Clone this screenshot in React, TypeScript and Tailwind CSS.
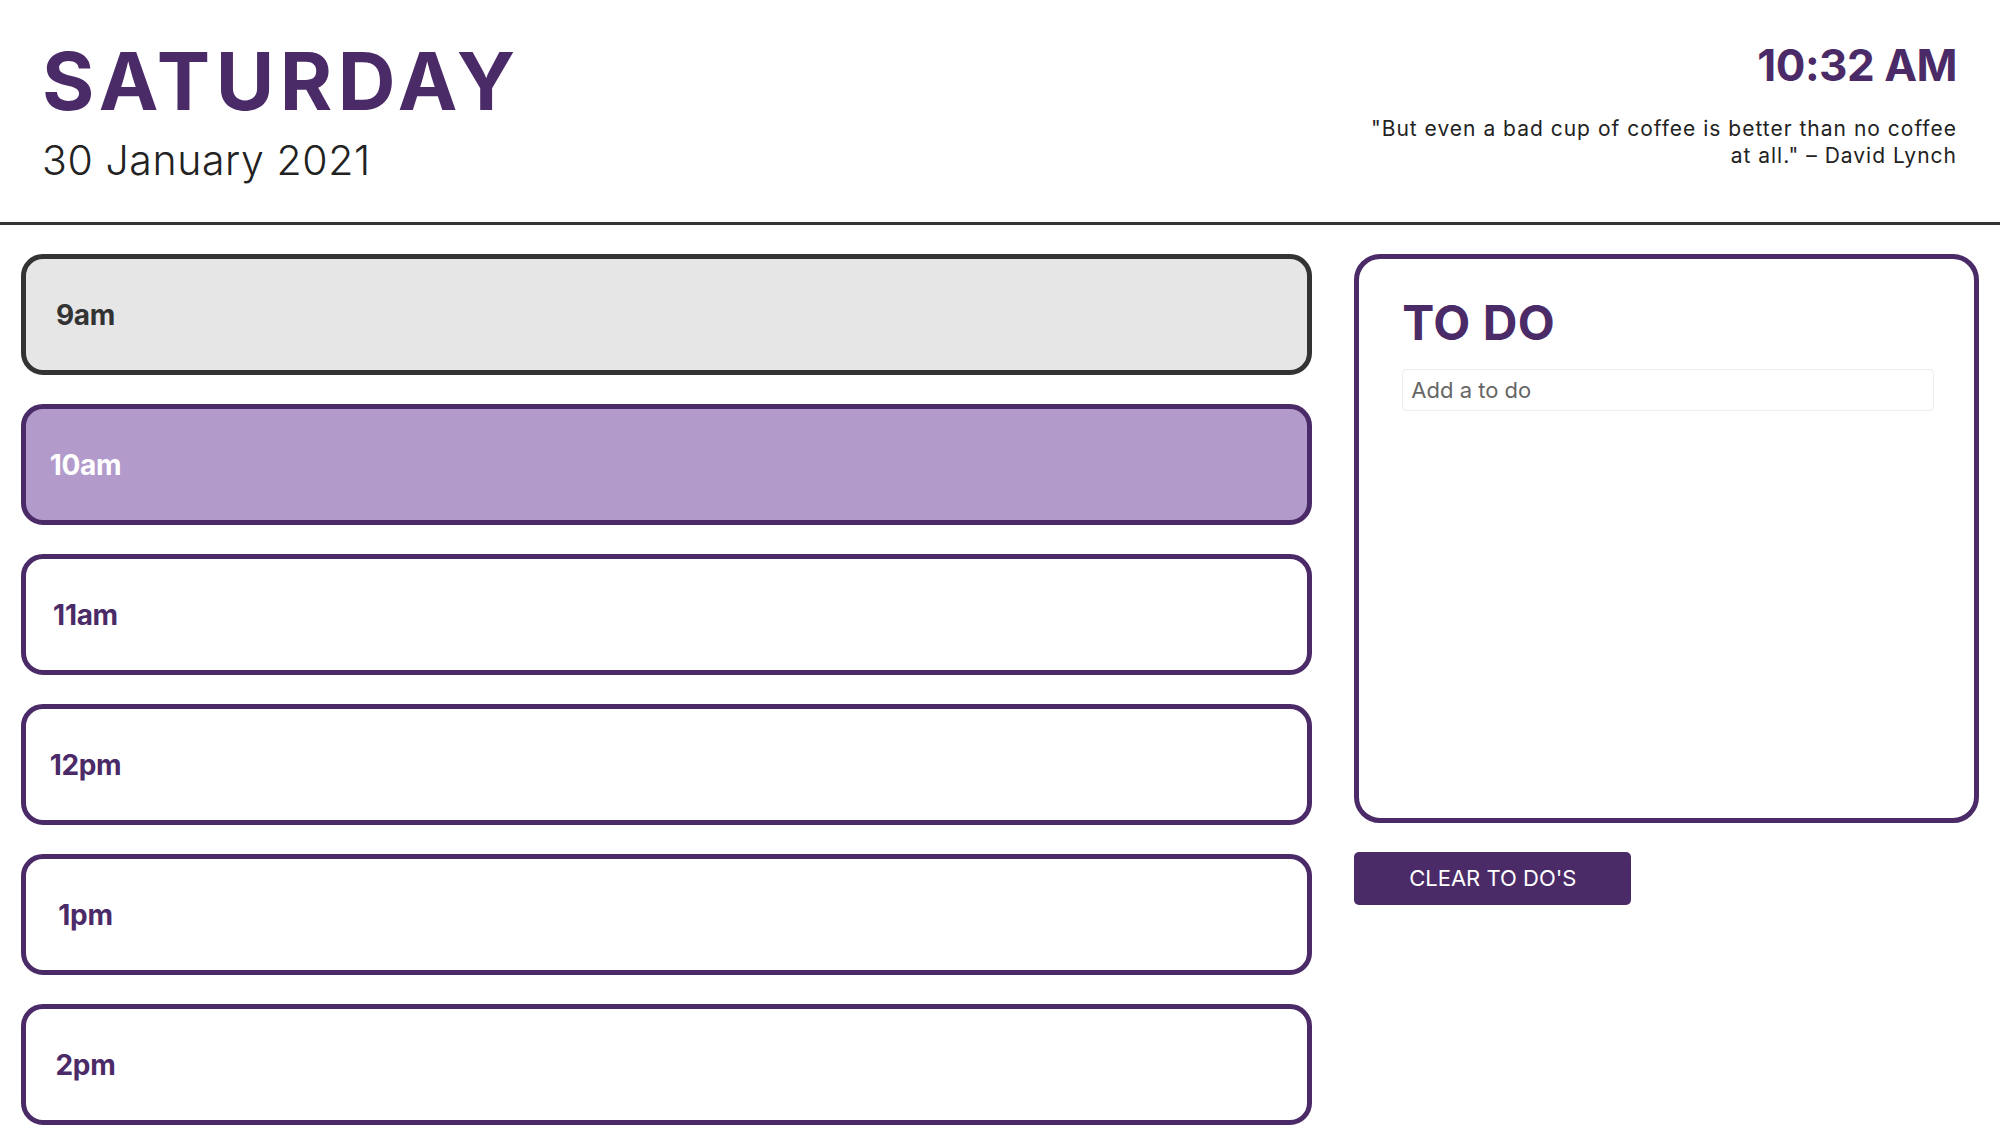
import React from "react";

const slots = [
  { label: "9am", state: "past" },
  { label: "10am", state: "present" },
  { label: "11am", state: "future" },
  { label: "12pm", state: "future" },
  { label: "1pm", state: "future" },
  { label: "2pm", state: "future" },
];

function Slot({ label, state }: { label: string; state: string }) {
  const cls =
    state === "past"
      ? "bg-[#e6e6e6] border-[#333333] text-[#333333]"
      : state === "present"
      ? "bg-[#b29bcb] border-[#4b2a68] text-white"
      : "bg-white border-[#4b2a68] text-[#4b2a68]";
  return (
    <div className={`flex h-[121px] items-center rounded-[22px] border-[5px] ${cls}`}>
      <div className="w-[119px] text-center text-[28px] font-bold leading-none tracking-[-0.3px]">{label}</div>
    </div>
  );
}

export default function App() {
  return (
    <div className="min-h-screen bg-white font-['Inter',sans-serif]">
      <header className="flex h-[225px] justify-between border-b-[3px] border-[#333333] pl-[42px] pr-[43px] pt-[41px]">
        <div>
          <h1 className="text-[80px] font-bold leading-none tracking-[5.5px] text-[#4b2a68]">SATURDAY</h1>
          <p className="mt-[19px] text-[41px] font-light leading-none tracking-[0.6px] text-[#222222]">30 January 2021</p>
        </div>
        <div className="pt-[2px] text-right">
          <div className="text-[44px] font-bold leading-none tracking-[-0.5px] text-[#4b2a68]">10:32 AM</div>
          <p className="mt-[28px] text-[21px] leading-[27px] tracking-[1px] text-[#222222]">
            "But even a bad cup of coffee is better than no coffee
            <br />
            at all." – David Lynch
          </p>
        </div>
      </header>
      <main className="flex">
        <div className="flex w-2/3 flex-col gap-[29px] px-[21px] pt-[29px]">
          {slots.map((s) => (
            <Slot key={s.label} label={s.label} state={s.state} />
          ))}
        </div>
        <div className="w-1/3 px-[21px] pt-[29px]">
          <div className="h-[569px] rounded-[26px] border-[5px] border-[#4b2a68] bg-white pl-[43px] pr-[40px] pt-[40px]">
            <h2 className="text-[48px] font-bold leading-none tracking-[0.5px] text-[#4b2a68]">TO DO</h2>
            <input
              className="mt-[22px] h-[42px] w-full rounded-[4px] border border-[#eeeeee] px-[8px] text-[22px] text-[#333333] outline-none placeholder:text-[#666666]"
              placeholder="Add a to do"
            />
          </div>
          <button className="mt-[29px] h-[53px] w-[277px] rounded-[5px] bg-[#4b2a68] text-[22px] text-white">
            CLEAR TO DO'S
          </button>
        </div>
      </main>
    </div>
  );
}
